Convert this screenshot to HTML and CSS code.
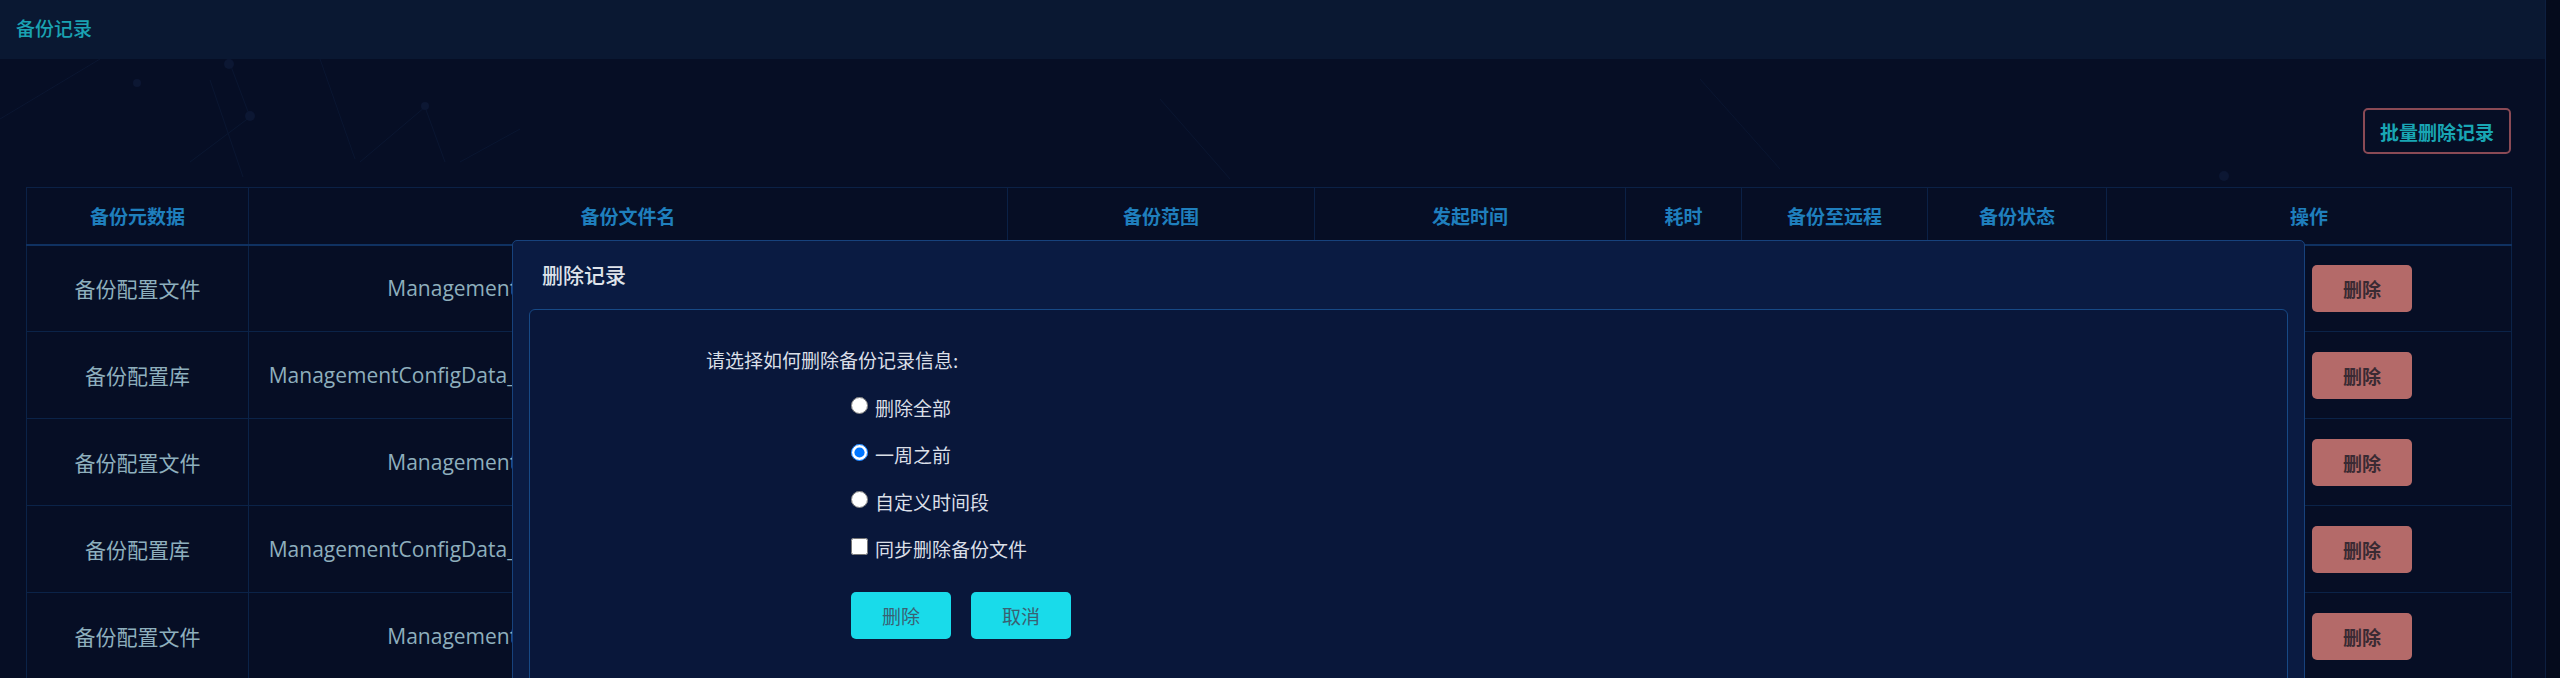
FILE: index.html
```html
<!DOCTYPE html>
<html lang="zh-CN">
<head>
<meta charset="utf-8">
<title>备份记录</title>
<link rel="stylesheet" href="styles.css">
</head>
<body>
<div class="page">
  <header class="topbar"><span class="topbar-title">备份记录</span></header>
  <main class="content">
    <svg class="bg-net" width="2519" height="619" viewBox="0 0 2519 619" aria-hidden="true">
      <g stroke="#0a1631" stroke-width="1" fill="none">
        <line x1="0" y1="60" x2="100" y2="0"/>
        <line x1="210" y1="21" x2="243" y2="118"/>
        <line x1="229" y1="2" x2="250" y2="58"/>
        <line x1="250" y1="58" x2="190" y2="103"/>
        <line x1="320" y1="0" x2="355" y2="100"/>
        <line x1="425" y1="48" x2="360" y2="103"/>
        <line x1="425" y1="48" x2="445" y2="103"/>
        <line x1="520" y1="70" x2="460" y2="103"/>
        <line x1="1160" y1="40" x2="1230" y2="120"/>
        <line x1="1700" y1="20" x2="1780" y2="110"/>
      </g>
      <g fill="#0c1733">
        <circle cx="229" cy="5" r="5"/>
        <circle cx="137" cy="24" r="4"/>
        <circle cx="250" cy="57" r="5"/>
        <circle cx="425" cy="47" r="4"/>
        <circle cx="2224" cy="117" r="5"/>
      </g>
    </svg>
    <div class="toolbar">
      <button class="btn-batch" type="button">批量删除记录</button>
    </div>
    <table class="records">
      <colgroup>
        <col class="c-meta"><col class="c-file"><col class="c-range"><col class="c-time">
        <col class="c-dur"><col class="c-remote"><col class="c-status"><col class="c-op">
      </colgroup>
      <thead>
        <tr>
          <th>备份元数据</th><th>备份文件名</th><th>备份范围</th><th>发起时间</th>
          <th>耗时</th><th>备份至远程</th><th>备份状态</th><th>操作</th>
        </tr>
      </thead>
      <tbody>
        <tr>
          <td>备份配置文件</td><td>ManagementConfigFile_20230611_0200_01.tar.gz</td><td>全部</td><td>2023-06-11 02:00:00</td>
          <td>3s</td><td>否</td><td>成功</td>
          <td><div class="ops"><button class="btn-hidden" type="button">恢复</button><button class="btn-del" type="button">删除</button></div></td>
        </tr>
        <tr>
          <td>备份配置库</td><td>ManagementConfigData_20230611020000_192.168.1.10_fullbak.sql.tar.gz</td><td>全部</td><td>2023-06-11 02:00:00</td>
          <td>5s</td><td>否</td><td>成功</td>
          <td><div class="ops"><button class="btn-hidden" type="button">恢复</button><button class="btn-del" type="button">删除</button></div></td>
        </tr>
        <tr>
          <td>备份配置文件</td><td>ManagementConfigFile_20230610_0200_01.tar.gz</td><td>全部</td><td>2023-06-10 02:00:00</td>
          <td>3s</td><td>否</td><td>成功</td>
          <td><div class="ops"><button class="btn-hidden" type="button">恢复</button><button class="btn-del" type="button">删除</button></div></td>
        </tr>
        <tr>
          <td>备份配置库</td><td>ManagementConfigData_20230610020000_192.168.1.10_fullbak.sql.tar.gz</td><td>全部</td><td>2023-06-10 02:00:00</td>
          <td>5s</td><td>否</td><td>成功</td>
          <td><div class="ops"><button class="btn-hidden" type="button">恢复</button><button class="btn-del" type="button">删除</button></div></td>
        </tr>
        <tr>
          <td>备份配置文件</td><td>ManagementConfigFile_20230609_0200_01.tar.gz</td><td>全部</td><td>2023-06-09 02:00:00</td>
          <td>3s</td><td>否</td><td>成功</td>
          <td><div class="ops"><button class="btn-hidden" type="button">恢复</button><button class="btn-del" type="button">删除</button></div></td>
        </tr>
      </tbody>
    </table>
  </main>

  <div class="modal" role="dialog" aria-label="删除记录">
    <div class="modal-header">删除记录</div>
    <div class="modal-body">
      <p class="question">请选择如何删除备份记录信息:</p>
      <div class="options">
        <label class="option"><input type="radio" name="mode"><span>删除全部</span></label>
        <label class="option"><input type="radio" name="mode" checked><span>一周之前</span></label>
        <label class="option"><input type="radio" name="mode"><span>自定义时间段</span></label>
        <label class="option"><input type="checkbox" class="check"><span>同步删除备份文件</span></label>
        <div class="actions">
          <button class="btn-cyan" type="button">删除</button>
          <button class="btn-cyan" type="button">取消</button>
        </div>
      </div>
    </div>
  </div>
</div>
</body>
</html>
```

FILE: styles.css
```css
* { box-sizing: border-box; }

html, body {
  margin: 0;
  padding: 0;
  height: 678px;
  overflow: hidden;
  background: #050b1c;
  font-family: "Open Sans", "Noto Sans CJK SC", sans-serif;
}

.page {
  position: relative;
  width: 2546px;
  height: 678px;
  background: #060e25;
  border-right: 1px solid #0d1f40;
}

.topbar {
  height: 59px;
  background: #0a1832;
  display: flex;
  align-items: center;
  padding: 0 0 5px 16px;
}

.topbar-title {
  font-family: "Noto Sans CJK SC", sans-serif;
  font-size: 19px;
  font-weight: 500;
  color: #1aa2b2;
}

.content {
  position: relative;
  padding: 49px 34px 0 26px;
}

.bg-net {
  position: absolute;
  left: 0;
  top: 0;
  z-index: 0;
}

.toolbar {
  position: relative;
  display: flex;
  justify-content: flex-end;
  margin-bottom: 33px;
}

.btn-batch {
  width: 148px;
  height: 46px;
  background: transparent;
  border: 2px solid #8a4a55;
  border-radius: 5px;
  color: #19a6b4;
  font-family: "Noto Sans CJK SC", sans-serif;
  font-size: 19px;
  font-weight: 700;
  padding: 0;
}

.records {
  position: relative;
  width: 2485px;
  border-collapse: collapse;
  table-layout: fixed;
  border: 1px solid #0c2550;
}

.c-meta { width: 222px; }
.c-file { width: 759px; }
.c-range { width: 307px; }
.c-time { width: 311px; }
.c-dur { width: 116px; }
.c-remote { width: 186px; }
.c-status { width: 179px; }
.c-op { width: 405px; }

.records th {
  height: 57px;
  color: #1f7fbd;
  font-family: "Noto Sans CJK SC", sans-serif;
  font-size: 19px;
  font-weight: 700;
  border: 1px solid #0b2146;
  border-bottom: 2px solid #0f3161;
  text-align: center;
  padding: 0;
}

.records td {
  height: 87px;
  color: #8eafbd;
  font-size: 21px;
  text-align: center;
  border: 1px solid #0b2348;
  padding: 0 8px;
  white-space: nowrap;
  overflow: hidden;
}

.ops {
  display: flex;
  justify-content: center;
  gap: 6px;
}

.btn-del, .btn-hidden {
  width: 100px;
  height: 47px;
  border: none;
  border-radius: 5px;
  background: #b46a69;
  color: #3a2a33;
  font-family: "Noto Sans CJK SC", sans-serif;
  font-size: 19px;
  font-weight: 700;
  padding: 0;
}

.btn-hidden { visibility: hidden; }

/* modal */
.modal {
  position: absolute;
  left: 512px;
  top: 240px;
  width: 1793px;
  height: 460px;
  background: #0a1b42;
  border: 1px solid #17427c;
  border-radius: 5px 5px 0 0;
  padding: 0 16px;
  z-index: 5;
}

.modal-header {
  height: 68px;
  display: flex;
  align-items: center;
  padding: 0 0 2px 13px;
  color: #dfe3ea;
  font-family: "Noto Sans CJK SC", sans-serif;
  font-size: 21px;
  font-weight: 500;
}

.modal-body {
  height: 400px;
  background: #09173a;
  border: 1px solid #174985;
  border-radius: 6px 6px 0 0;
  padding: 37px 0 0 176px;
}

.question {
  margin: 0;
  height: 26px;
  line-height: 26px;
  color: #dadfe7;
  font-family: "Noto Sans CJK SC", sans-serif;
  font-size: 19px;
}

.options {
  margin: 11px 0 0 145px;
}

.option {
  display: flex;
  align-items: center;
  height: 47px;
  color: #dadfe7;
  font-family: "Noto Sans CJK SC", sans-serif;
  font-size: 19px;
}

.option input {
  width: 17px;
  height: 17px;
  margin: 0 7px 4px 0;
}

.actions {
  display: flex;
  gap: 20px;
  margin-top: 20px;
}

.btn-cyan {
  width: 100px;
  height: 47px;
  border: none;
  border-radius: 5px;
  background: #19dbea;
  color: #3a6173;
  font-family: "Noto Sans CJK SC", sans-serif;
  font-size: 19px;
  padding: 0;
}
```
